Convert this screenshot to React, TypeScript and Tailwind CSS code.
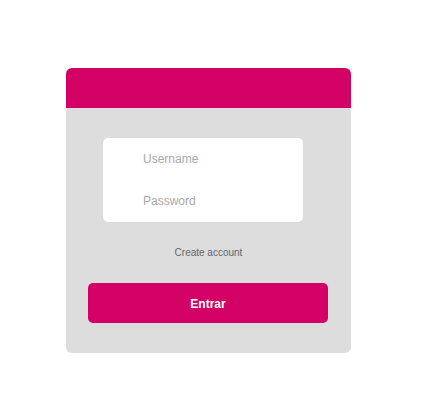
import React, { useState } from "react";

export default function App() {
  const [username, setUsername] = useState("");
  const [password, setPassword] = useState("");

  return (
    <div className="min-h-[408px] w-[430px] bg-white pt-[68px] pl-[66px] font-['Liberation_Sans',Arial,sans-serif]">
      <div className="w-[285px] h-[285px] rounded-[6px] bg-[#dddddd] overflow-hidden flex flex-col">
        <div className="h-[40px] bg-[#d30066]" />
        <div className="flex flex-col pt-[30px]">
          <div className="ml-[37px] w-[200px] rounded-[5px] bg-white flex flex-col">
            <input
              type="text"
              placeholder="Username"
              value={username}
              onChange={(e) => setUsername(e.target.value)}
              className="h-[42px] pl-[40px] pr-3 text-[12px] text-[#333] placeholder:text-[#a9a9a9] bg-transparent outline-none"
            />
            <input
              type="password"
              placeholder="Password"
              value={password}
              onChange={(e) => setPassword(e.target.value)}
              className="h-[42px] pl-[40px] pr-3 text-[12px] text-[#333] placeholder:text-[#a9a9a9] bg-transparent outline-none"
            />
          </div>
          <a className="mt-[24px] self-center text-[10px] leading-[14px] text-[#666] cursor-pointer">
            Create account
          </a>
          <button className="mt-[23px] ml-[22px] w-[240px] h-[40px] pt-[1px] rounded-[5px] bg-[#d30066] text-white text-[12px] font-bold">
            Entrar
          </button>
        </div>
      </div>
    </div>
  );
}
